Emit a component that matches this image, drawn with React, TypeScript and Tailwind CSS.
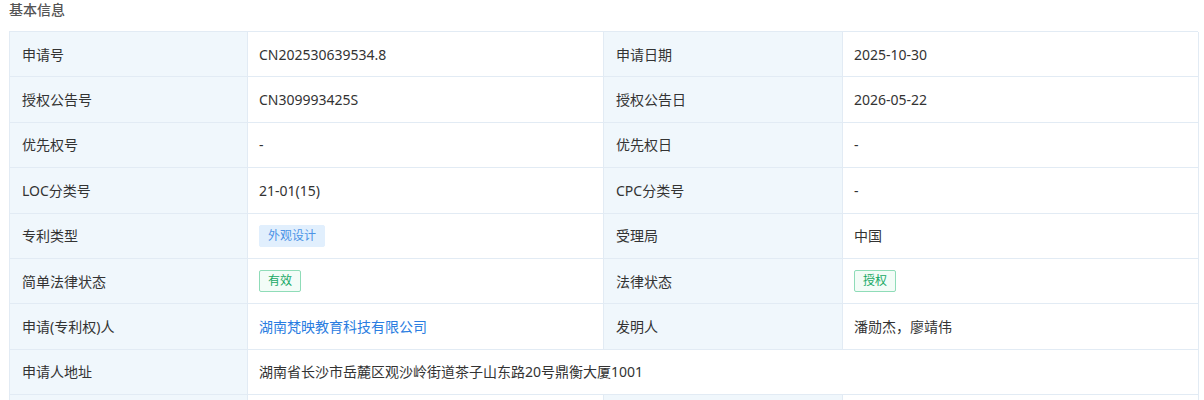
import React from "react"

type Cell =
  | { kind: "text"; value: string }
  | { kind: "link"; value: string }
  | { kind: "tagBlue"; value: string }
  | { kind: "tagGreen"; value: string }

type Row = {
  label1: string
  value1: Cell
  label2?: string
  value2?: Cell
}

const t = (value: string): Cell => ({ kind: "text", value })

const rows: Row[] = [
  { label1: "申请号", value1: t("CN202530639534.8"), label2: "申请日期", value2: t("2025-10-30") },
  { label1: "授权公告号", value1: t("CN309993425S"), label2: "授权公告日", value2: t("2026-05-22") },
  { label1: "优先权号", value1: t("-"), label2: "优先权日", value2: t("-") },
  { label1: "LOC分类号", value1: t("21-01(15)"), label2: "CPC分类号", value2: t("-") },
  { label1: "专利类型", value1: { kind: "tagBlue", value: "外观设计" }, label2: "受理局", value2: t("中国") },
  {
    label1: "简单法律状态",
    value1: { kind: "tagGreen", value: "有效" },
    label2: "法律状态",
    value2: { kind: "tagGreen", value: "授权" },
  },
  {
    label1: "申请(专利权)人",
    value1: { kind: "link", value: "湖南梵映教育科技有限公司" },
    label2: "发明人",
    value2: t("潘勋杰，廖靖伟"),
  },
  { label1: "申请人地址", value1: t("湖南省长沙市岳麓区观沙岭街道茶子山东路20号鼎衡大厦1001") },
  { label1: "", value1: t(""), label2: " ", value2: t("") },
]

function CellContent({ cell }: { cell: Cell }) {
  if (cell.kind === "link") {
    return <span className="text-[#2a7de1] cursor-pointer">{cell.value}</span>
  }
  if (cell.kind === "tagBlue") {
    return (
      <span className="inline-block rounded-[2px] border border-[#e1effd] bg-[#e1effd] px-2 text-[12px] leading-5 text-[#4c93e6]">
        {cell.value}
      </span>
    )
  }
  if (cell.kind === "tagGreen") {
    return (
      <span className="inline-block rounded-[2px] border border-[#8fdcb8] bg-[#f3fcf7] px-2 text-[12px] leading-5 text-[#17a864]">
        {cell.value}
      </span>
    )
  }
  return <span>{cell.value}</span>
}

const labelCls =
  "flex items-center border-r border-b border-[#e2ebf4] bg-[#f0f7fc] px-3 text-[#333]"
const valueCls = "flex items-center border-r border-b border-[#e2ebf4] bg-white px-[11px] text-[#333]"

export default function App() {
  return (
    <div
      className="w-[1204px] bg-white pl-[9px] text-[14px]"
      style={{ fontFamily: '"Noto Sans", "Noto Sans CJK SC", sans-serif' }}
    >
      <div className="h-[31px] leading-5 text-[14px] font-medium text-[#555]">基本信息</div>

      <div className="grid w-[1189px] grid-cols-[238px_356px_239px_356px] border-t border-l border-[#e2ebf4]">
        {rows.map((row, i) => (
          <React.Fragment key={i}>
            <div className={`${labelCls} h-[45.375px]`}>{row.label1}</div>
            {row.label2 ? (
              <>
                <div className={valueCls}>
                  <CellContent cell={row.value1} />
                </div>
                <div className={labelCls}>{row.label2}</div>
                <div className={valueCls}>{row.value2 && <CellContent cell={row.value2} />}</div>
              </>
            ) : (
              <div className={`${valueCls} col-span-3`}>
                <CellContent cell={row.value1} />
              </div>
            )}
          </React.Fragment>
        ))}
      </div>
    </div>
  )
}
